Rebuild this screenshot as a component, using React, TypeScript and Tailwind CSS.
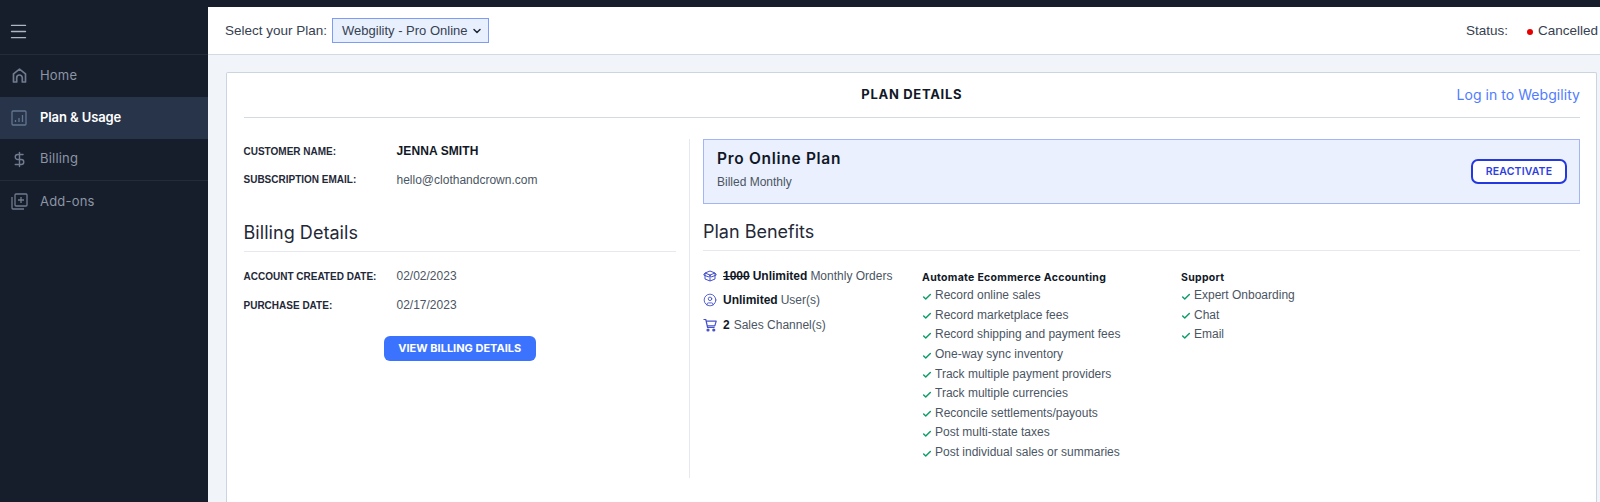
import React from 'react';
import { Check, ChevronDown, CircleUser, DollarSign, Menu } from 'lucide-react';

const HEAD = "font-['Inter','Noto_Sans',sans-serif]";

const accounting = [
  'Record online sales',
  'Record marketplace fees',
  'Record shipping and payment fees',
  'One-way sync inventory',
  'Track multiple payment providers',
  'Track multiple currencies',
  'Reconcile settlements/payouts',
  'Post multi-state taxes',
  'Post individual sales or summaries',
];

const support = ['Expert Onboarding', 'Chat', 'Email'];

const HomeIcon = () => (
  <svg width="17" height="17" viewBox="0 0 17 17" fill="none" stroke="currentColor" strokeWidth="1.7" strokeLinejoin="round">
    <path d="M2.5 15V6.8l6-4.6 6 4.6V15h-3.2v-4.2a2.8 2.8 0 0 0-5.6 0V15z" />
  </svg>
);

const UsageIcon = () => (
  <svg width="16" height="16" viewBox="0 0 16 16" fill="none" stroke="currentColor" strokeWidth="1.3">
    <rect x="1" y="1" width="14" height="14" rx="1" />
    <path d="M4.5 12v-2M8 12V8M11.5 12V5" />
  </svg>
);

const AddOnsIcon = () => (
  <svg width="17" height="17" viewBox="0 0 17 17" fill="none" stroke="currentColor" strokeWidth="1.3">
    <rect x="4" y="1" width="12" height="12" rx="1" />
    <path d="M10 4v6M7 7h6M1 4v11a1 1 0 0 0 1 1h11" />
  </svg>
);

const BoxIcon = () => (
  <svg width="14" height="12" viewBox="0 0 14 12" fill="none" stroke="currentColor" strokeWidth="1" strokeLinejoin="round" className="text-[#4450c8] mr-[6px]">
    <path d="M2 3l5-2 5 2v6l-5 2-5-2zM2 3l5 2 5-2M7 5v6M2 3L.7 5l5 2L7 5l1.3 2 5-2L12 3" />
  </svg>
);

const CartIcon = () => (
  <svg width="14" height="14" viewBox="0 0 14 14" fill="none" stroke="currentColor" strokeWidth="1.2" strokeLinejoin="round" className="text-[#4450c8] mr-[6px]">
    <path d="M.5 1.5h2.3L4.6 9.5h7M3.2 3.2h10l-1.4 4.6H4.2" />
    <circle cx="5" cy="12" r="1" fill="currentColor" />
    <circle cx="10.8" cy="12" r="1" fill="currentColor" />
  </svg>
);

const NavItem = ({ icon, label, active, border }: { icon: React.ReactNode; label: string; active?: boolean; border?: boolean }) => (
  <div className={`flex items-center h-[41.9px] pl-[11px] text-[13px] ${HEAD} ${active ? 'bg-[#27344a] text-white font-semibold tracking-[-0.1px]' : 'text-[#8b95a5] tracking-[0.2px]'} ${border ? 'border-b border-[#232c3b]' : ''}`}>
    <span className={`w-[29px] flex items-center ${active ? 'text-[#64748f]' : 'text-[#6f7b8e]'}`}>{icon}</span>
    {label}
  </div>
);

const InfoRow = ({ label, value, strong }: { label: string; value: string; strong?: boolean }) => (
  <div className="flex items-center h-[14px]">
    <span className="w-[153px] text-[10px] font-semibold text-[#1f2937]">{label}</span>
    <span className={strong ? 'text-[12px] font-bold tracking-[0.1px] text-[#111827]' : 'text-[12px] text-[#4b5563]'}>{value}</span>
  </div>
);

const CheckItem = ({ text }: { text: string }) => (
  <div className="flex items-center h-[19.6px] text-[12px] text-[#4b5563]">
    <Check size={10} strokeWidth={3.5} className="text-[#0f9d68] mr-[3px] mt-[3px]" />
    {text}
  </div>
);

const App: React.FC = () => {
  return (
    <div className="flex h-[502px] overflow-hidden bg-[#171e2b] font-['Liberation_Sans',Arial,sans-serif]">
      {/* Sidebar */}
      <aside className="w-[208px] shrink-0">
        <div className="h-[55px] flex items-center pl-[8px] pt-[9px] border-b border-[#232c3b] text-[#aeb6c2]">
          <Menu size={21} strokeWidth={1.6} />
        </div>
        <NavItem icon={<HomeIcon />} label="Home" />
        <NavItem icon={<UsageIcon />} label="Plan & Usage" active />
        <NavItem icon={<DollarSign size={17} strokeWidth={2} />} label="Billing" border />
        <NavItem icon={<AddOnsIcon />} label="Add-ons" />
      </aside>

      <div className="flex-1 mt-[7px] min-w-0 bg-[#f1f5f9] flex flex-col">
        {/* Top bar */}
        <header className="h-[48px] shrink-0 bg-white border-b border-[#d5dae1] flex items-center pl-[17px] text-[13.5px] text-[#374151]">
          <span className="pt-[1px]">Select your Plan:</span>
          <div className="ml-[5px] w-[157px] h-[25px] bg-[#e8f0fe] border border-[#7f9cf5] flex items-center justify-between pl-[9px] pr-[5px] text-[13px] text-[#374151] whitespace-nowrap">
            Webgility - Pro Online
            <ChevronDown size={12} strokeWidth={3} className="text-[#1f2937]" />
          </div>
          <span className="ml-auto pt-[1px]">Status:</span>
          <span className="ml-[19px] w-[6px] h-[6px] rounded-full bg-[#e60000] mt-[2px]"></span>
          <span className="ml-[5px] whitespace-nowrap w-[62px] pt-[1px]">Cancelled</span>
        </header>

        <main className="flex-1 pt-[17px] pl-[18px] pr-[3px]">
          <div className="h-full bg-white border border-b-0 border-[#cbd5e1] rounded-t-[2px] pl-[16.5px] pr-[16px]">
            {/* Card title */}
            <div className="relative h-[45px] border-b border-[#d5dae1] flex items-center justify-center">
              <h1 className={`text-[13px] font-bold text-[#111827] tracking-[0.7px] ${HEAD}`}>PLAN DETAILS</h1>
              <a className={`absolute right-0 top-[11px] text-[14px] tracking-[0.05px] text-[#4f7cff] ${HEAD}`}>Log in to Webgility</a>
            </div>

            <div className="flex mt-[21px]">
              {/* Left column */}
              <section className="w-[446.5px] h-[339px] border-r border-[#e5e9ef] pr-[13px] shrink-0">
                <div className="pt-[5px] flex flex-col gap-[14.5px]">
                  <InfoRow label="CUSTOMER NAME:" value="JENNA SMITH" strong />
                  <InfoRow label="SUBSCRIPTION EMAIL:" value="hello@clothandcrown.com" />
                </div>
                <h2 className={`mt-[34.5px] text-[18px] leading-[24px] tracking-[0.05px] text-[#1f2937] ${HEAD}`}>Billing Details</h2>
                <div className="mt-[6px] border-t border-[#e5e9ef] pt-[17px] flex flex-col gap-[15px]">
                  <InfoRow label="ACCOUNT CREATED DATE:" value="02/02/2023" />
                  <InfoRow label="PURCHASE DATE:" value="02/17/2023" />
                </div>
                <div className="flex justify-center mt-[24px]">
                  <button className={`w-[152px] h-[25px] rounded-[6px] bg-[#3b73ff] text-white text-[11px] font-bold ${HEAD}`}>VIEW BILLING DETAILS</button>
                </div>
              </section>

              {/* Right column */}
              <section className="flex-1 pl-[13px] min-w-0">
                <div className="h-[65px] bg-[#eaf0fd] border border-[#a3b5f7] flex items-center justify-between pl-[13px] pr-[12px]">
                  <div className="pb-[6px]">
                    <div className={`text-[15.5px] font-semibold tracking-[0.7px] text-[#111827] leading-[20px] ${HEAD}`}>Pro Online Plan</div>
                    <div className="mt-[6px] text-[12px] text-[#4b5563] leading-[14px]">Billed Monthly</div>
                  </div>
                  <button className={`w-[96px] h-[25px] rounded-[7px] bg-white border-2 border-[#2438e0] text-[#2d3ee0] text-[10.5px] font-semibold tracking-[0.15px] ${HEAD}`}>REACTIVATE</button>
                </div>

                <h2 className={`mt-[16px] text-[18px] leading-[24px] text-[#1f2937] ${HEAD}`}>Plan Benefits</h2>
                <div className="mt-[6px] border-t border-[#e5e9ef] pt-[17px] flex">
                  <div className="w-[219px] flex flex-col gap-[9.5px] text-[12px] text-[#4b5563]">
                    <div className="flex items-center h-[15px]">
                      <BoxIcon />
                      <s className="font-bold text-[#111827] mr-[3px]">1000</s>
                      <b className="text-[#111827] mr-[3px]">Unlimited</b> Monthly Orders
                    </div>
                    <div className="flex items-center h-[15px]">
                      <CircleUser size={14} strokeWidth={1.5} className="text-[#4450c8] mr-[6px]" />
                      <b className="text-[#111827] mr-[3px]">Unlimited</b> User(s)
                    </div>
                    <div className="flex items-center h-[15px]">
                      <CartIcon />
                      <b className="text-[#111827] mr-[4px]">2</b> Sales Channel(s)
                    </div>
                  </div>
                  <div className="w-[259px] pt-[3px]">
                    <div className={`text-[10.5px] font-bold tracking-[0.3px] text-[#111827] leading-[14.5px] ${HEAD}`}>Automate Ecommerce Accounting</div>
                    {accounting.map(t => <CheckItem key={t} text={t} />)}
                  </div>
                  <div className="pt-[3px]">
                    <div className={`text-[10.5px] font-bold tracking-[0.3px] text-[#111827] leading-[14.5px] ${HEAD}`}>Support</div>
                    {support.map(t => <CheckItem key={t} text={t} />)}
                  </div>
                </div>
              </section>
            </div>
          </div>
        </main>
      </div>
    </div>
  );
};

export default App;
